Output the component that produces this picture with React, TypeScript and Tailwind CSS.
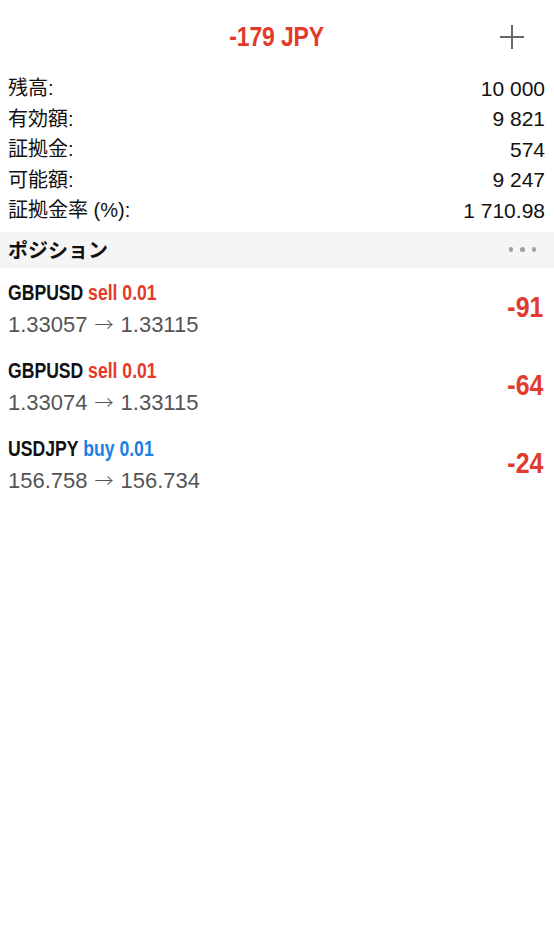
const BASE = '"Liberation Sans", "Noto Sans CJK JP", sans-serif'

const balance = [
  { label: '残高:', value: '10 000' },
  { label: '有効額:', value: '9 821' },
  { label: '証拠金:', value: '574' },
  { label: '可能額:', value: '9 247' },
  { label: '証拠金率 (%):', value: '1 710.98' },
]

const positions = [
  { symbol: 'GBPUSD', side: 'sell', volume: '0.01', open: '1.33057', current: '1.33115', profit: '-91' },
  { symbol: 'GBPUSD', side: 'sell', volume: '0.01', open: '1.33074', current: '1.33115', profit: '-64' },
  { symbol: 'USDJPY', side: 'buy', volume: '0.01', open: '156.758', current: '156.734', profit: '-24' },
]

function PlusIcon() {
  return (
    <svg width="24" height="24" viewBox="0 0 24 24" className="text-[#666]">
      <path d="M12 0v24M0 12h24" stroke="currentColor" strokeWidth="2" fill="none" />
    </svg>
  )
}

export default function App() {
  return (
    <div className="min-h-[940px] w-full bg-white text-[#111]" style={{ fontFamily: BASE }}>
      <header className="grid h-[73px] grid-cols-[1fr_auto_1fr] items-center">
        <div />
        <h1 className="origin-center scale-x-[0.82] text-[28px] font-bold leading-none tracking-[-0.2px] text-[#e23b2c]">
          -179 JPY
        </h1>
        <div className="flex justify-end pr-[30px]">
          <PlusIcon />
        </div>
      </header>

      <div className="pl-[8px] pr-[9px]">
        {balance.map((row) => (
          <div key={row.label} className="flex h-[30.5px] items-center justify-between text-[20px]">
            <span>{row.label}</span>
            <span className="text-[21px]">{row.value}</span>
          </div>
        ))}
      </div>

      <div className="mt-[6px] flex h-[36px] items-center justify-between bg-[#f5f5f5] pl-[8px] pr-[18px]">
        <span className="text-[20px] font-bold" style={{ fontFamily: '"Noto Sans CJK JP", sans-serif' }}>
          ポジション
        </span>
        <div className="flex gap-[7px]">
          <span className="size-[4.5px] rounded-full bg-[#a0a0a0]" />
          <span className="size-[4.5px] rounded-full bg-[#a0a0a0]" />
          <span className="size-[4.5px] rounded-full bg-[#a0a0a0]" />
        </div>
      </div>

      <ul>
        {positions.map((p, i) => (
          <li key={i} className="flex h-[78px] items-center justify-between pl-[8px] pr-[11px]">
            <div className="flex flex-col pt-[11px] pb-[6px]">
              <div className="flex h-[28px] origin-left scale-x-[0.8] items-center text-[22px] font-bold">
                <span className="text-[#111]">{p.symbol}</span>
                <span className={p.side === 'buy' ? 'ml-[6px] text-[#1b7fe3]' : 'ml-[6px] text-[#e23b2c]'}>
                  {p.side} {p.volume}
                </span>
              </div>
              <div className="mt-[3px] flex h-[30px] items-center text-[22px] text-[#555]">
                <span>{p.open}</span>
                <span
                  className="mx-[7px] text-[19px] font-light"
                  style={{ fontFamily: '"Noto Sans CJK JP", sans-serif' }}
                >
                  →
                </span>
                <span>{p.current}</span>
              </div>
            </div>
            <span className="origin-right scale-x-[0.83] text-[30px] font-bold text-[#e23b2c]">
              {p.profit}
            </span>
          </li>
        ))}
      </ul>
    </div>
  )
}
